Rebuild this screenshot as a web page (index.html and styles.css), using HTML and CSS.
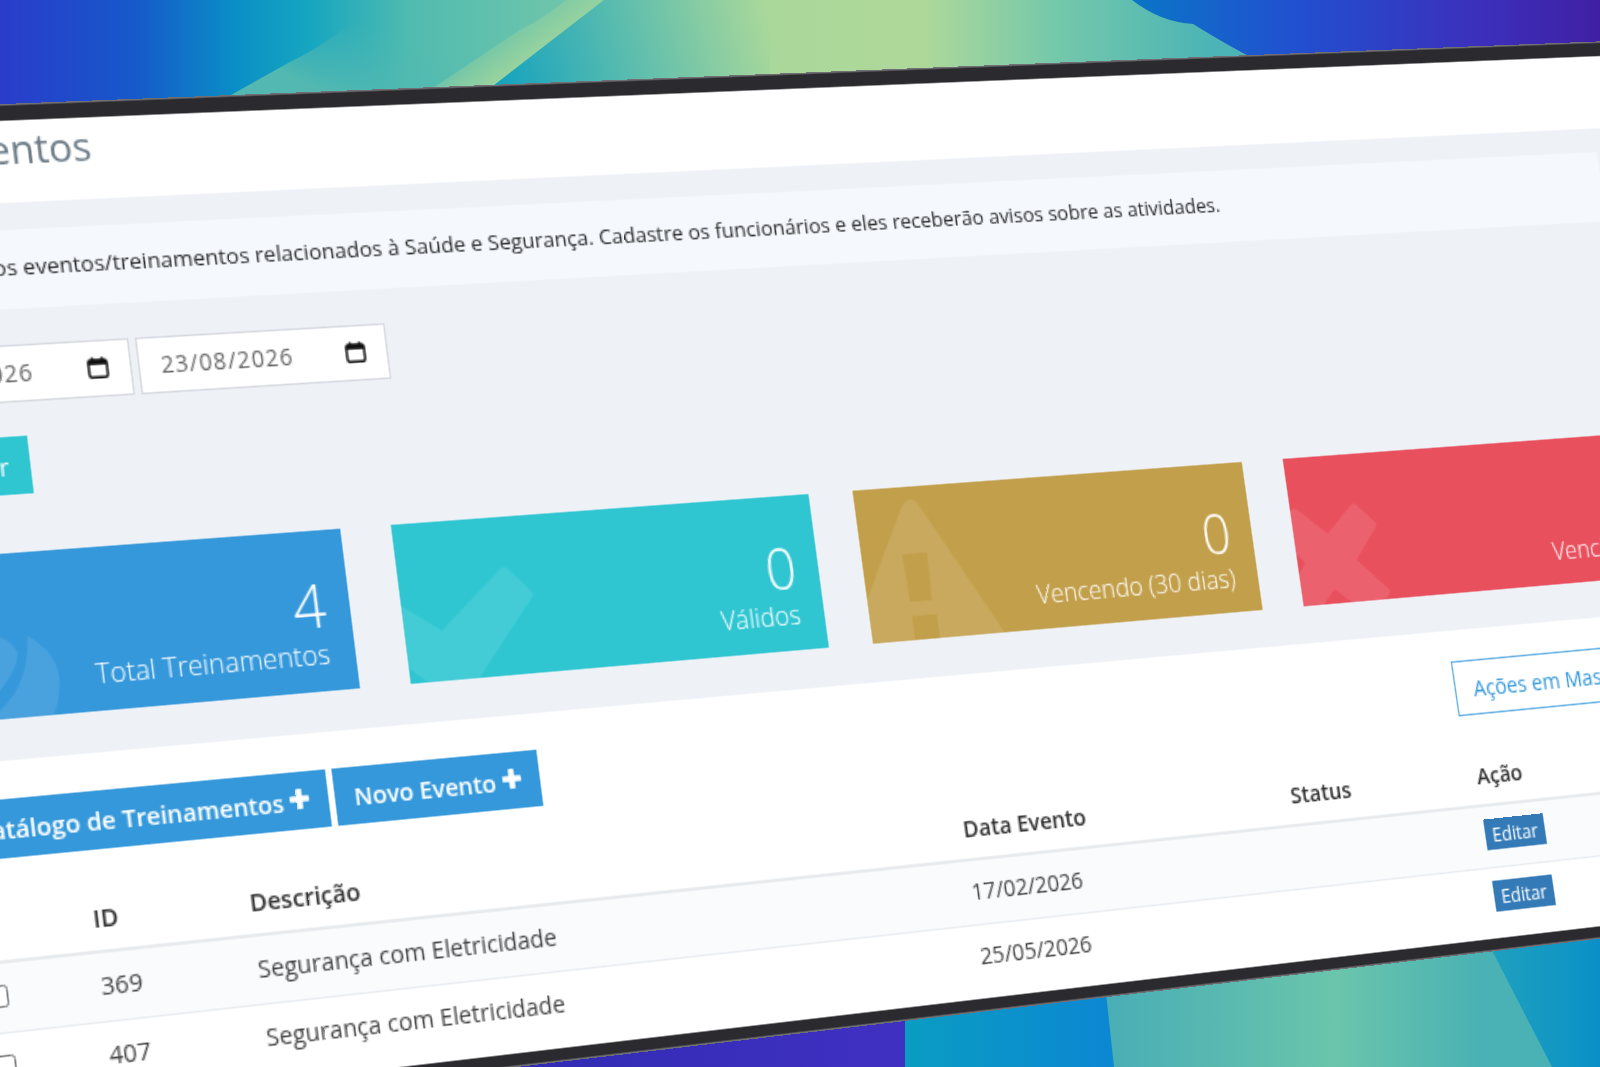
FILE: index.html
```html
<!DOCTYPE html>
<html lang="pt-BR">
<head>
  <meta charset="UTF-8">
  <meta name="viewport" content="width=device-width, initial-scale=1.0">
  <title>Treinamentos</title>
  <link rel="stylesheet" href="styles.css">
</head>
<body>
  <!-- desktop wallpaper behind the tilted monitor -->
  <svg class="wallpaper" viewBox="0 0 1600 1067" preserveAspectRatio="none">
    <defs>
      <linearGradient id="wpBase" gradientUnits="userSpaceOnUse" x1="0" y1="0" x2="620" y2="0">
        <stop offset="0" stop-color="#2a3ccb"/>
        <stop offset="0.22" stop-color="#1659ca"/>
        <stop offset="0.38" stop-color="#0a8fc6"/>
        <stop offset="0.5" stop-color="#16a6c0"/>
        <stop offset="0.66" stop-color="#50bbb0"/>
        <stop offset="1" stop-color="#7ac9a8"/>
      </linearGradient>
      <linearGradient id="wpSoft" gradientUnits="userSpaceOnUse" x1="330" y1="10" x2="300" y2="80">
        <stop offset="0" stop-color="#52b8b1" stop-opacity="0"/>
        <stop offset="1" stop-color="#52b8b1"/>
      </linearGradient>
      <linearGradient id="wpStripe" gradientUnits="userSpaceOnUse" x1="498" y1="18" x2="535" y2="76">
        <stop offset="0" stop-color="#a9d89a" stop-opacity="0"/>
        <stop offset="1" stop-color="#a9d89a"/>
      </linearGradient>
      <linearGradient id="wpMid" gradientUnits="userSpaceOnUse" x1="490" y1="90" x2="770" y2="20">
        <stop offset="0" stop-color="#10a0c0"/>
        <stop offset="0.5" stop-color="#5cbdae"/>
        <stop offset="1" stop-color="#aad89a"/>
      </linearGradient>
      <linearGradient id="wpGreen" gradientUnits="userSpaceOnUse" x1="770" y1="0" x2="1210" y2="0">
        <stop offset="0" stop-color="#aad89a"/>
        <stop offset="0.35" stop-color="#aed89a"/>
        <stop offset="0.65" stop-color="#74c8aa"/>
        <stop offset="1" stop-color="#4cb4b6"/>
      </linearGradient>
      <linearGradient id="wpViolet" gradientUnits="userSpaceOnUse" x1="1130" y1="0" x2="1600" y2="0">
        <stop offset="0" stop-color="#0a76c6"/>
        <stop offset="0.35" stop-color="#2150d0"/>
        <stop offset="0.75" stop-color="#3c2fbb"/>
        <stop offset="1" stop-color="#3f20a4"/>
      </linearGradient>
      <linearGradient id="wpLowPurple" gradientUnits="userSpaceOnUse" x1="400" y1="0" x2="905" y2="0">
        <stop offset="0" stop-color="#2c2ab0"/>
        <stop offset="1" stop-color="#4030c2"/>
      </linearGradient>
      <linearGradient id="wpLowBlue" gradientUnits="userSpaceOnUse" x1="905" y1="0" x2="1105" y2="0">
        <stop offset="0" stop-color="#0a9cc2"/>
        <stop offset="1" stop-color="#0c88d2"/>
      </linearGradient>
      <linearGradient id="wpLowTeal" gradientUnits="userSpaceOnUse" x1="1100" y1="0" x2="1480" y2="0">
        <stop offset="0" stop-color="#48adb6"/>
        <stop offset="0.62" stop-color="#6ac5ab"/>
        <stop offset="1" stop-color="#4ab2b4"/>
      </linearGradient>
      <linearGradient id="wpLowEnd" gradientUnits="userSpaceOnUse" x1="1470" y1="0" x2="1600" y2="0">
        <stop offset="0" stop-color="#22a4bc"/>
        <stop offset="1" stop-color="#0a90c8"/>
      </linearGradient>
    </defs>
    <rect width="1600" height="200" fill="url(#wpBase)"/>
    <path d="M204 110 L290 62 Q340 38 372 0 L610 0 L470 110 Z" fill="url(#wpSoft)"/>
    <path d="M400 110 L520 30 Q550 14 566 0 L604 0 L462 110 Z" fill="url(#wpStripe)"/>
    <path d="M462 110 L604 0 L772 0 L772 110 Z" fill="url(#wpMid)"/>
    <path d="M770 0 H1132 Q1160 22 1193 24 Q1225 44 1256 60 V110 H770 Z" fill="url(#wpGreen)"/>
    <path d="M1132 0 H1600 V110 H1256 V60 Q1225 44 1193 24 Q1160 22 1132 0 Z" fill="url(#wpViolet)"/>
    <rect y="900" x="0" width="906" height="167" fill="url(#wpLowPurple)"/>
    <rect y="900" x="905" width="210" height="167" fill="url(#wpLowBlue)"/>
    <path d="M1096 900 H1480 L1560 1067 H1114 Z" fill="url(#wpLowTeal)"/>
    <path d="M1466 900 H1600 V1067 H1552 Z" fill="url(#wpLowEnd)"/>
  </svg>

  <div class="screen">
    <div class="page">
      <header class="page-header">
        <h1>Treinamentos</h1>
      </header>

      <section class="content">
        <div class="panel">Gerencie os eventos/treinamentos relacionados à Saúde e Segurança. Cadastre os funcionários e eles receberão avisos sobre as atividades.</div>

        <div class="filters">
          <div class="date-field">
            <span>23/02/2026</span>
            <svg class="calendar" viewBox="0 0 14 14"><rect x="1" y="2.2" width="12" height="11" rx="1.6" fill="none" stroke="#111" stroke-width="1.5"/><rect x="1" y="2.2" width="12" height="3" fill="#111"/><rect x="3" y="0.4" width="1.6" height="2.4" fill="#111"/><rect x="9.4" y="0.4" width="1.6" height="2.4" fill="#111"/></svg>
          </div>
          <div class="date-field">
            <span>23/08/2026</span>
            <svg class="calendar" viewBox="0 0 14 14"><rect x="1" y="2.2" width="12" height="11" rx="1.6" fill="none" stroke="#111" stroke-width="1.5"/><rect x="1" y="2.2" width="12" height="3" fill="#111"/><rect x="3" y="0.4" width="1.6" height="2.4" fill="#111"/><rect x="9.4" y="0.4" width="1.6" height="2.4" fill="#111"/></svg>
          </div>
        </div>

        <button class="btn-filter">Filtrar</button>

        <div class="cards">
          <div class="card card-blue">
            <svg class="card-icon">
              <path d="M75 49 Q92 60 91 76 Q90 88 83 100 L40 100 Q60 88 66 78 Q74 66 75 49 Z"/>
              <path d="M50 44 Q66 50 68 58 Q68 68 48 86 L30 86 L30 44 Z"/>
            </svg>
            <div class="card-value">4</div>
            <div class="card-label">Total Treinamentos</div>
          </div>
          <div class="card card-teal">
            <svg class="card-icon">
              <path class="rounded" d="M-20 38 L24 69 L68 33 L82 48 L30 108 L-26 62 Z"/>
            </svg>
            <div class="card-value">0</div>
            <div class="card-label">Válidos</div>
          </div>
          <div class="card card-gold">
            <svg class="card-icon">
              <path fill-rule="evenodd" d="M38 8 Q42 8 45 14 L100 112 L-25 112 L31 14 Q34 8 38 8 Z M28 42 L45 42 L44 72 L29 72 Z M29 81 L46 81 L46 100 L29 100 Z"/>
            </svg>
            <div class="card-value">0</div>
            <div class="card-label">Vencendo (30 dias)</div>
          </div>
          <div class="card card-red">
            <svg class="card-icon">
              <path class="rounded" d="M25 54 L47 35 L59 47 L40 69 L62 91 L49 104 L24 83 L1 107 L-12 94 L9 68 L-10 47 L3 35 Z"/>
            </svg>
            <div class="card-value">0</div>
            <div class="card-label">Vencidos</div>
          </div>
        </div>
      </section>

      <section class="lower">
        <div class="actions">
          <div class="actions-left">
            <button class="btn-blue btn-catalog">Catálogo de Treinamentos <svg class="plus" viewBox="0 0 12 12"><rect x="4.2" width="3.6" height="12" rx="0.8"/><rect y="4.2" width="12" height="3.6" rx="0.8"/></svg></button>
            <button class="btn-blue">Novo Evento <svg class="plus" viewBox="0 0 12 12"><rect x="4.2" width="3.6" height="12" rx="0.8"/><rect y="4.2" width="12" height="3.6" rx="0.8"/></svg></button>
          </div>
          <button class="btn-outline">Ações em Massa</button>
        </div>

        <table class="events">
          <colgroup>
            <col class="col-check"><col class="col-id"><col class="col-desc"><col class="col-date"><col class="col-status"><col class="col-action">
          </colgroup>
          <thead>
            <tr>
              <th></th>
              <th>ID</th>
              <th>Descrição</th>
              <th>Data Evento</th>
              <th>Status</th>
              <th>Ação</th>
            </tr>
          </thead>
          <tbody>
            <tr>
              <td class="cell-check"><input type="checkbox"></td>
              <td>369</td>
              <td>Segurança com Eletricidade</td>
              <td>17/02/2026</td>
              <td></td>
              <td><button class="btn-edit">Editar</button></td>
            </tr>
            <tr>
              <td class="cell-check"><input type="checkbox"></td>
              <td>407</td>
              <td>Segurança com Eletricidade</td>
              <td>25/05/2026</td>
              <td></td>
              <td><button class="btn-edit">Editar</button></td>
            </tr>
          </tbody>
        </table>
      </section>
    </div>
  </div>
</body>
</html>
```

FILE: styles.css
```css
:root {
  --blue: #3498db;
  --teal: #2fc6d2;
  --gold: #c29f4a;
  --red: #e9505e;
  --gray-bg: #eef1f6;
  --text: #333;
}

* {
  box-sizing: border-box;
}

body {
  margin: 0;
  height: 100vh;
  overflow: hidden;
  position: relative;
  background: #1a2a80;
  font-family: "Open Sans", "Noto Sans", sans-serif;
  font-size: 14px;
  color: var(--text);
}

.wallpaper {
  position: absolute;
  inset: 0;
  width: 100%;
  height: 100%;
}

/* the monitor, tilted on the desktop */
.screen {
  position: absolute;
  top: 0;
  left: 0;
  width: 1248px;
  padding: 9px 9px 7px;
  border: 1px solid #6f6f74;
  background: #2b2b2f;
  transform-origin: 0 0;
  transform: matrix3d(1.62591, -0.050691, 0, 0.0001258, 0.195625, 1.6351, 0, -0.000030927, 0, 0, 1, 0, -205.708, 108.654, 0, 0.966116);
}

.page {
  height: 576px;
  overflow: hidden;
  background: #fff;
}

.page-header {
  height: 49px;
  padding-left: 13px;
}

h1 {
  margin: 0;
  font-size: 24px;
  font-weight: 400;
  line-height: 33px;
  color: #6b7b87;
}

.content {
  padding: 16px 20px 24px;
  background: var(--gray-bg);
}

.panel {
  height: 47px;
  margin-right: 4px;
  padding: 0 21px 3px;
  display: flex;
  align-items: center;
  background: #f5f8fd;
  font-size: 13.47px;
  color: #2b2b2b;
  white-space: nowrap;
}

.filters {
  display: flex;
  gap: 4px;
  margin: 21px 0 0 1px;
}

.date-field {
  width: 156px;
  height: 34px;
  padding: 0 14px 2px 13px;
  display: flex;
  align-items: center;
  justify-content: space-between;
  background: #fff;
  border: 1px solid #d5d8de;
  letter-spacing: 0.8px;
  color: #666;
}

.calendar {
  width: 13px;
  height: 13px;
  margin-right: -1px;
}

button {
  font-family: inherit;
  border: 0;
  cursor: pointer;
}

.btn-filter {
  display: block;
  width: 89px;
  height: 34px;
  margin-top: 20px;
  padding: 0 13px 0 0;
  text-align: right;
  background: var(--teal);
  color: #fff;
  font-size: 14px;
}

.cards {
  display: flex;
  gap: 30px;
  margin-top: 34px;
}

.card {
  position: relative;
  flex: 0 0 274.5px;
  height: 96px;
  padding: 26.5px 16px 0;
  overflow: hidden;
  text-align: right;
  color: #fff;
}

.card-blue {
  flex-basis: 273px;
  margin-right: 1.5px;
  background: var(--blue);
}
.card-teal { background: var(--teal); }
.card-gold { background: var(--gold); }
.card-red { background: var(--red); }

.card-icon {
  position: absolute;
  top: 0;
  left: 0;
  width: 100%;
  height: 100%;
  fill: #fff;
  opacity: 0.1;
}

.card-icon .rounded {
  stroke: #fff;
  stroke-width: 5;
  stroke-linejoin: round;
}

.card-value {
  position: relative;
  margin-right: -1px;
  font-size: 36px;
  font-weight: 300;
  line-height: 36px;
}

.card-label {
  position: relative;
  font-size: 16.6px;
  font-weight: 300;
  line-height: 22px;
  white-space: nowrap;
}

.lower {
  padding: 22px 20px 0;
}

.actions {
  display: flex;
  justify-content: space-between;
  height: 34px;
}

.actions-left {
  display: flex;
  gap: 4px;
}

.btn-blue {
  height: 34px;
  padding: 0 12px;
  background: var(--blue);
  color: #fff;
  font-size: 14.7px;
  font-weight: 600;
  white-space: nowrap;
}

.btn-catalog {
  width: 245px;
  text-align: right;
}

.plus {
  width: 12px;
  height: 12px;
  fill: #fff;
  vertical-align: 1px;
}

.btn-outline {
  width: 172px;
  height: 36px;
  margin-top: -2px;
  padding: 0 13px;
  text-align: left;
  background: #fff;
  border: 1px solid #5dade2;
  color: var(--blue);
  font-size: 14.6px;
}

.events {
  width: 1188px;
  margin-top: 21px;
  table-layout: fixed;
  border-collapse: collapse;
  font-size: 14.6px;
}

.col-check { width: 86px; }
.col-id { width: 95px; }
.col-desc { width: 464px; }
.col-date { width: 232px; }
.col-status { width: 138px; }

.events th {
  padding: 7.5px 8px 8.5px;
  height: 38px;
  text-align: left;
  font-weight: 600;
  line-height: 20px;
  border-bottom: 2px solid #e8ebee;
}

.events td {
  height: 40px;
  padding: 0 8px 2px;
  color: #444;
}

.events tbody tr:nth-child(odd) {
  background: #f9fbfd;
}

.events tbody tr + tr td {
  border-top: 1px solid #e8ecf0;
}

.events .cell-check {
  padding-left: 26px;
}

.cell-check input {
  display: block;
  margin: 0;
}

.btn-edit {
  display: block;
  width: 45px;
  height: 20px;
  padding: 0;
  background: #337ab7;
  color: #fff;
  font-size: 12.5px;
}
```
